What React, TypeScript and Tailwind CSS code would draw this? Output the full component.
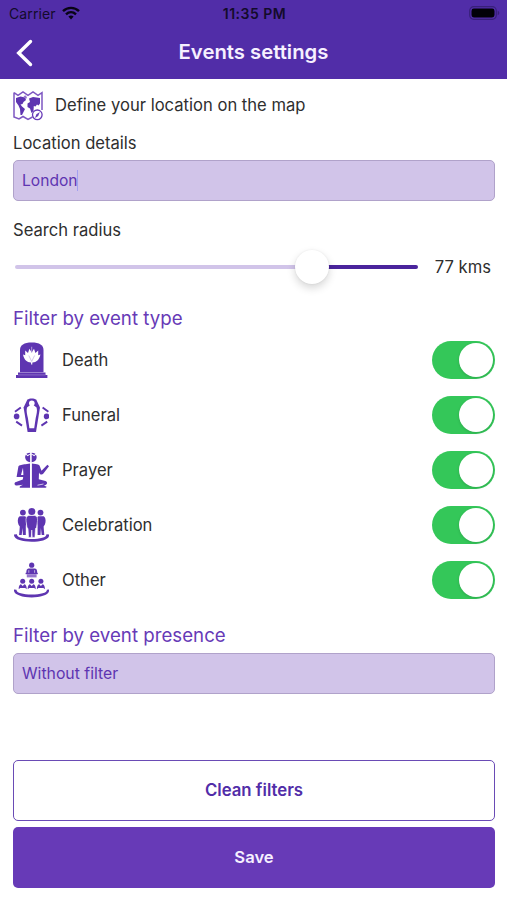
import { useState } from "react";
import type { ReactNode } from "react";

interface EventType {
  id: string;
  label: string;
  icon: ReactNode;
}

const MAX_RADIUS = 104.4;

const MapIcon = () => (
  <svg viewBox="0 0 30 30" className="-mt-0.5 h-[30px] w-[30px]" fill="none">
    <path
      d="M1 1.6 L5 4.4 L10 1 L15 4.4 L20 1 L25 4.4 L29 1.6 V19 M1 1.6 V26 L6 28 L10 25.5 L15 28.4 L19.5 26"
      stroke="#7e57c2"
      strokeWidth="1.5"
    />
    <path
      d="M3 7 L7.5 5.5 L12 6.5 L13 9 L10.5 11 L9.5 13 L7.5 13.5 L9 15.5 L12 18 L10.5 21 L9 24 L7.5 24 L7 18 L5.5 14.5 L3 11 Z"
      fill="#5e35b1"
    />
    <path
      d="M16 7.5 L20 6 L27 7 V12.5 L25.5 14.5 L24 13.5 L22.5 15.5 L20.8 15 L20.5 20 L18.5 22 L17 17.5 L14.5 16 V12.5 L17 11 Z"
      fill="#5e35b1"
    />
    <path d="M10.5 5 L13 4.5 L14 7 L12.5 8 Z" fill="#9575cd" />
    <circle cx="24.3" cy="23.8" r="4.8" fill="white" stroke="#673ab7" strokeWidth="1.3" />
    <path d="M26.8 21 L25.2 25 L22 27 L23.4 23.2 Z" fill="#673ab7" />
  </svg>
);

const DeathIcon = () => (
  <svg viewBox="0 0 36 36" className="h-9 w-9" fill="#5e35b1">
    <path d="M7 30.2 V8 C7 3 11 .5 18.7 .5 C26.5 .5 30.5 3 30.5 8 V30.2 Z" />
    <path d="M5 30.6 H32.5 V33 H5 Z M3 33 H34.4 V36 H3 Z" />
    <path d="M5 32.9 H32.5" stroke="#b39ddb" strokeWidth=".5" />
    <path
      d="M18.7 20.4 C14.5 20.8 11.3 18.5 10 12.6 L12.2 13.2 L12.2 8.5 L15 11 L16.4 6.8 L18.7 10.5 L21 6.8 L22.4 11 L25.2 8.5 L25.2 13.2 L27.4 12.6 C26.1 18.5 22.9 20.8 18.7 20.4 Z"
      fill="white"
    />
    <path d="M18.7 19.5 L15.8 13.5 M18.7 19.5 L21.6 13.5" stroke="#b39ddb" strokeWidth=".6" />
    <path d="M18.2 4.8 H19.2 V10.5 H18.2 Z" fill="#b39ddb" />
    <path d="M18.1 20 H19.3 V22.5 H18.1 Z" fill="white" />
  </svg>
);

const FuneralIcon = () => (
  <svg viewBox="0 0 36 36" className="h-9 w-9" fill="#5e35b1">
    <path d="M14.4 2.6 C16.5 1 21 1 23.2 2.6 L27 10.5 L23 34.9 H14.6 L10.6 10.5 Z" />
    <circle cx="18.8" cy="6.2" r="2.8" fill="white" />
    <path
      d="M17.3 8 H20.3 L23.6 10.5 C24.6 14 23.4 17.5 22.7 21 L21.2 31.2 H16.4 L14.9 21 C14.2 17.5 13 14 14 10.5 Z"
      fill="white"
    />
    <circle cx="3.6" cy="19.4" r="2.8" />
    <circle cx="33.6" cy="19.4" r="2.8" />
    <path
      d="M2 14.8 L7.8 10.4 M3.2 24.6 L9 28.6 M35.4 14.8 L29.6 10.4 M34.2 24.6 L28.4 28.6"
      stroke="#5e35b1"
      strokeWidth="1.9"
    />
  </svg>
);

const PrayerIcon = () => (
  <svg viewBox="0 0 36 36" className="h-9 w-9" fill="#5e35b1">
    <path d="M17.1 2.4 V10.2 C14.6 10 12.8 8.4 12.2 6 C12 4.8 12.3 3.6 12.9 2.8 L14.7 4.2 Z" />
    <path d="M18.7 2.4 V10.2 C21.4 10 23.2 8.4 23.6 6 C23.8 4.8 23.5 3.6 22.9 2.8 L21.1 4.2 Z" />
    <path d="M13.4 1.8 C14.5 1 15.8 .7 17.1 .7 V1.7 L14.5 3 Z M22.4 1.8 C21.3 1 20 .7 18.7 .7 V1.7 L21.3 3 Z" />
    <path d="M12.5 12.2 L17 11.6 V35.8 H7.5 C6.5 35.8 6.3 34.4 7.5 33.9 L10 32.8 L4 33.5 C1 33.6 .8 30.7 3 30 L9.8 27.5 L10.2 25 H3.6 L5.4 14.6 C6 12.8 9.6 12.5 12.5 12.2 Z" />
    <path d="M10 15.8 L8 23 H10.4 Z" fill="white" />
    <path d="M18.9 11.6 L24 12.2 C26.5 12.6 27 14 27.6 16.5 L28.5 18.7 L34.4 12.8 L36 14.2 L30.2 21.8 C29 23.2 27 22.7 26 20.4 L25.8 27.2 L31.5 28.8 C34.6 29.6 34.9 31.8 32.5 33 L31 33.8 L33.4 34.4 C33.8 35.2 33 35.8 31.5 35.8 H18.9 Z" />
    <path d="M24.5 33.2 L30.5 32" stroke="white" strokeWidth=".7" fill="none" />
  </svg>
);

const CelebrationIcon = () => (
  <svg viewBox="0 0 36 36" className="h-9 w-9" fill="#5e35b1">
    <circle cx="9.9" cy="5.6" r="2.9" />
    <circle cx="27.5" cy="5.6" r="2.9" />
    <path d="M7.6 9.3 H12 C13.6 9.8 13.8 12 13.4 15 L12.8 19 V28 H9.9 L9.5 21 L8.7 28 H6.1 L6.8 19.5 C4.8 17.2 4.4 14 5.1 11.5 C5.6 9.9 6.5 9.3 7.6 9.3 Z" />
    <path d="M29.8 9.3 H25.4 C23.8 9.8 23.6 12 24 15 L24.6 19 V28 H27.5 L27.9 21 L28.7 28 H31.3 L30.6 19.5 C32.6 17.2 33 14 32.3 11.5 C31.8 9.9 30.9 9.3 29.8 9.3 Z" />
    <path
      d="M15.8 8.5 H21.7 C24.3 9 24.8 11.3 24.4 14.5 L23.5 20.5 L22.5 21.4 L21.9 30.4 H19.2 L18.75 23 L18.3 30.4 H15.6 L15 21.4 L14 20.5 L13.1 14.5 C12.7 11.3 13.2 9 15.8 8.5 Z"
      stroke="white"
      strokeWidth=".6"
    />
    <circle cx="18.8" cy="4.5" r="3.5" />
    <path d="M1 27.5 L4 27.2 C3.5 30.5 10 32 18.7 32 C27.5 32 33.9 30.5 33.4 27.2 L36 27.5 C37 32.5 28 34.8 18.7 34.8 C9.5 34.8 .2 32.5 1 27.5 Z" />
  </svg>
);

const OtherIcon = () => (
  <svg viewBox="0 0 36 36" className="h-9 w-9" fill="#5e35b1">
    <circle cx="18.7" cy="3.2" r="2.6" />
    <path d="M15.5 6.4 H22 C23.8 6.6 24.2 8.2 24.2 11 H13.3 C13.3 8.2 13.8 6.6 15.5 6.4 Z" />
    <path d="M12.6 10.8 H24.8 V12.2 H12.6 Z" />
    <path d="M13.8 12.2 H23.6 V15.4 H13.8 Z" fill="#9575cd" />
    <path d="M15.8 8.2 V10.8 M21.6 8.2 V10.8" stroke="white" strokeWidth=".6" />
    {[9.7, 18.7, 27.9].map((x) => (
      <g key={x} transform={`translate(${x} 0)`}>
        <circle cx="0" cy="19.2" r="2.5" />
        <path d="M-4 27.2 C-4.2 23.8 -2.7 22.2 -1.7 22.2 L0 24.1 L1.7 22.2 C2.7 22.2 4.2 23.8 4 27.2 L2.5 25.9 H-2.5 Z" />
      </g>
    ))}
    <path d="M1 27.5 L3.5 27.7 C3.5 31 10 32.4 18.7 32.4 C27.5 32.4 33.9 31 33.9 27.7 L36 27.5 C37.2 32.8 28 35.4 18.7 35.4 C9.5 35.4 0 32.8 1 27.5 Z" />
  </svg>
);

const EVENT_TYPES: EventType[] = [
  { id: "death", label: "Death", icon: <DeathIcon /> },
  { id: "funeral", label: "Funeral", icon: <FuneralIcon /> },
  { id: "prayer", label: "Prayer", icon: <PrayerIcon /> },
  { id: "celebration", label: "Celebration", icon: <CelebrationIcon /> },
  { id: "other", label: "Other", icon: <OtherIcon /> },
];

const StatusBar = () => (
  <div className="grid h-7 grid-cols-3 items-center pr-[7px] pl-[9px] text-[#130b2b]">
    <div className="-mt-px flex items-center gap-1.5 text-[14px] tracking-[0.1px]">
      Carrier
      <svg viewBox="0 0 18 14" className="-mt-0.5 h-3.5 w-[18px]" fill="none" stroke="#080414" strokeWidth="2.4">
        <path d="M1 5.2 C5.5 .8 12.5 .8 17 5.2" />
        <path d="M4 8.4 C7 5.6 11 5.6 14 8.4" />
        <path d="M6.4 10.5 C8 9 10 9 11.6 10.5 L9 13.4 Z" fill="#080414" stroke="none" />
      </svg>
    </div>
    <div className="-mt-px text-center text-[14px] font-semibold tracking-[0.5px]">11:35 PM</div>
    <svg viewBox="0 0 31 14" className="-mt-0.5 h-3.5 w-[31px] justify-self-end">
      <rect x=".7" y=".7" width="26.6" height="12.6" rx="4" fill="none" stroke="#38207a" strokeWidth="1.2" />
      <rect x="2.5" y="2.5" width="23" height="9" rx="2.4" fill="#020108" />
      <path d="M28.7 4.8 C30.8 5.5 30.8 8.5 28.7 9.2 Z" fill="#38207a" />
    </svg>
  </div>
);

interface ToggleProps {
  label: string;
  checked: boolean;
  onChange: () => void;
}

const Toggle = ({ label, checked, onChange }: ToggleProps) => (
  <button
    type="button"
    role="switch"
    aria-checked={checked}
    aria-label={label}
    onClick={onChange}
    className={`flex h-[38px] w-[63px] items-center rounded-full p-[2px] ${
      checked ? "justify-end bg-[#34c759]" : "justify-start bg-gray-300"
    }`}
  >
    <span className="h-[34px] w-[34px] rounded-full bg-white shadow-[0_1px_3px_rgba(0,0,0,0.15)]" />
  </button>
);

const App = () => {
  const [location, setLocation] = useState("London");
  const [radius] = useState(77);
  const [disabledTypes, setDisabledTypes] = useState<string[]>([]);

  const toggleType = (id: string) => {
    setDisabledTypes((prev) =>
      prev.includes(id) ? prev.filter((item) => item !== id) : [...prev, id]
    );
  };

  const handleClean = () => {
    setLocation("");
    setDisabledTypes([]);
  };

  const position = `${(radius / MAX_RADIUS) * 100}%`;

  return (
    <div className="flex h-[900px] w-[507px] flex-col overflow-hidden bg-white font-['Inter',sans-serif] text-[16.6px] text-[#2f2f2f]">
      <header className="h-[79px] shrink-0 bg-[#512da8]">
        <StatusBar />
        <div className="grid h-[49px] grid-cols-[48px_1fr_48px] items-center">
          <button type="button" aria-label="Back" className="pl-[15px]">
            <svg viewBox="0 0 18 28" className="h-7 w-[18px]" fill="none" stroke="white" strokeWidth="3.4">
              <path d="M15.5 2.5 L3.7 14 L15.5 25.5" strokeLinecap="round" />
            </svg>
          </button>
          <h1 className="text-center text-[20.3px] font-semibold text-[#f6f0ff]">Events settings</h1>
        </div>
      </header>

      <main className="flex flex-1 flex-col pt-[13px] pr-3 pl-[13px]">
        <div className="flex h-[30px] items-center gap-3">
          <MapIcon />
          <span className="pb-1">Define your location on the map</span>
        </div>

        <h2 className="mt-[9px] h-6 leading-6">Location details</h2>
        <div className="mt-[5px] flex h-[41px] items-center rounded-[5px] border border-[#b0a2ca] bg-[#d1c4e9] px-2 text-[15.6px] text-[#5e35b1]">
          <span>{location}</span>
          <span className="-ml-px h-[21px] w-[1.5px] bg-[#a3a0f0]" />
        </div>

        <h2 className="mt-[17px] h-6 leading-6">Search radius</h2>
        <div className="mt-[5px] flex h-[40px] items-center pr-1 pl-[2px]">
          <div className="relative flex h-1 w-[403px]">
            <div className="h-1 rounded-l-full bg-[#d1c4e9]" style={{ width: position }} />
            <div className="h-1 flex-1 rounded-r-full bg-[#4a249c]" />
            <span
              className="absolute -top-[15px] h-[34px] w-[34px] -translate-x-1/2 rounded-full bg-white shadow-[0_4px_9px_rgba(0,0,0,0.16),0_0_2px_rgba(0,0,0,0.08)]"
              style={{ left: position }}
            />
          </div>
          <span className="flex-1 text-right">{radius} kms</span>
        </div>

        <h2 className="mt-[18px] h-[27px] text-[18.7px] leading-7 text-[#673ab7]">Filter by event type</h2>
        <ul>
          {EVENT_TYPES.map(({ id, label, icon }) => (
            <li key={id} className="flex h-[55px] items-center">
              {icon}
              <span className="ml-[13px] flex-1 pt-0.5">{label}</span>
              <Toggle
                label={label}
                checked={!disabledTypes.includes(id)}
                onChange={() => toggleType(id)}
              />
            </li>
          ))}
        </ul>

        <h2 className="mt-[15px] h-7 text-[18.7px] leading-7 text-[#673ab7]">Filter by event presence</h2>
        <div className="mt-[3px] flex h-[41px] items-center rounded-[5px] border border-[#b0a2ca] bg-[#d1c4e9] px-2 text-[15.8px] text-[#5e35b1]">
          Without filter
        </div>

        <div className="mt-auto flex flex-col gap-[6px] pb-3">
          <button
            type="button"
            onClick={handleClean}
            className="h-[61px] rounded-[5px] border-[1.5px] border-[#6a4bb5] text-[16.8px] font-semibold text-[#512da8]"
          >
            Clean filters
          </button>
          <button type="button" className="h-[61px] rounded-[5px] bg-[#673ab7] font-semibold text-[#f6f0ff]">
            Save
          </button>
        </div>
      </main>
    </div>
  );
};

export default App;
